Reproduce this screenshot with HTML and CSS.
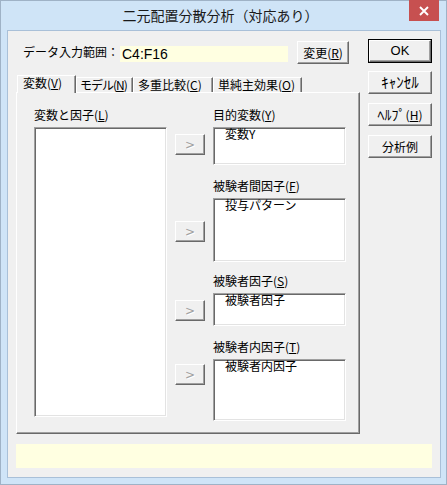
FILE: index.html
```html
<!DOCTYPE html>
<html lang="ja">
<head>
<meta charset="utf-8">
<title>二元配置分散分析（対応あり）</title>
<link rel="stylesheet" href="styles.css">
</head>
<body>
<div class="window">
  <div class="titlebar">
    <div class="title">二元配置分散分析（対応あり）</div>
    <div class="close">
      <svg width="10" height="10" viewBox="0 0 10 10"><path d="M1 1L9 9M9 1L1 9" stroke="#fff" stroke-width="1.9" fill="none"/></svg>
    </div>
  </div>
  <div class="client">
    <div class="main">
      <div class="leftcol">
        <div class="datarow">
          <span class="datalabel">データ入力範囲：</span>
          <span class="datafield">C4:F16</span>
          <button class="btn btn-change">変更(<u>R</u>)</button>
        </div>
        <div class="tabs">
          <div class="tab tab-active t1">変数(<u>V</u>)</div>
          <div class="tab t2">モデル(<u>N</u>)</div>
          <div class="tab t3">多重比較(<u>C</u>)</div>
          <div class="tab t4">単純主効果(<u>O</u>)</div>
        </div>
        <div class="panel">
          <div class="pcol pleft">
            <div class="lbl">変数と因子(<u>L</u>)</div>
            <div class="listbox list-main"></div>
          </div>
          <div class="pcol pmid">
            <button class="arrow a1">&gt;</button>
            <button class="arrow a2">&gt;</button>
            <button class="arrow a3">&gt;</button>
            <button class="arrow a4">&gt;</button>
          </div>
          <div class="pcol pright">
            <div class="lbl">目的変数(<u>Y</u>)</div>
            <div class="listbox box1"><div class="item">変数Y</div></div>
            <div class="lbl g2">被験者間因子(<u>F</u>)</div>
            <div class="listbox box2"><div class="item">投与パターン</div></div>
            <div class="lbl g3">被験者因子(<u>S</u>)</div>
            <div class="listbox box3"><div class="item">被験者因子</div></div>
            <div class="lbl g4">被験者内因子(<u>T</u>)</div>
            <div class="listbox box4"><div class="item">被験者内因子</div></div>
          </div>
        </div>
      </div>
      <div class="side">
        <div class="default-ring"><button class="btn btn-ok">OK</button></div>
        <button class="btn btn-side s2"><span class="hw">ｷｬﾝｾﾙ</span></button>
        <button class="btn btn-side s3"><span class="hw">ﾍﾙﾌﾟ</span>(<u>H</u>)</button>
        <button class="btn btn-side s4">分析例</button>
      </div>
    </div>
    <div class="status"></div>
  </div>
</div>
</body>
</html>
```

FILE: styles.css
```css
* { box-sizing: border-box; }
html, body { margin: 0; padding: 0; }
body {
  width: 447px;
  height: 485px;
  font-family: "Noto Sans CJK JP", "Noto Sans", sans-serif;
  font-size: 12px;
  color: #000;
  overflow: hidden;
}
.window {
  width: 447px;
  height: 485px;
  background: #cfe4f7;
  border: 1px solid #9fb2c6;
  display: flex;
  flex-direction: column;
}
.titlebar {
  height: 29px;
  display: grid;
  grid-template-columns: 1fr auto 1fr;
  align-items: start;
}
.title {
  grid-column: 2;
  font-size: 14px;
  line-height: 28px;
  margin-right: 6px;
  color: #1a1a1a;
  white-space: nowrap;
}
.close {
  grid-column: 3;
  justify-self: end;
  width: 30px;
  height: 21px;
  margin-top: -1px;
  margin-right: 7px;
  background: #c75050;
  display: flex;
  align-items: center;
  justify-content: center;
}
.close svg { display: block; }
.client {
  flex: 1;
  margin: 0 5px 6px 6px;
  border: 1px solid #a9c0d8;
  background: #f0f0f0;
  padding: 8px 8px 0 8px;
  display: flex;
  flex-direction: column;
}
.main {
  display: flex;
  gap: 8px;
}
.leftcol {
  width: 344px;
  display: flex;
  flex-direction: column;
}
.datarow {
  margin-top: 2px;
  height: 23px;
  display: flex;
  align-items: flex-start;
}
.datalabel {
  margin-left: 7px;
  width: 97px;
  margin-top: 3px;
  line-height: 16px;
  white-space: nowrap;
}
.datafield {
  width: 168px;
  height: 16px;
  margin-top: 5px;
  background: #ffffe1;
  font-family: "Liberation Sans", sans-serif;
  font-size: 14px;
  line-height: 16px;
  padding-left: 2px;
}
.btn {
  font-family: "Noto Sans CJK JP", sans-serif;
  font-size: 12px;
  color: #000;
  background: #f0f0f0;
  border: 1px solid;
  border-color: #fff #696969 #696969 #fff;
  box-shadow: inset -1px -1px 0 #a0a0a0;
  padding: 0;
  margin: 0;
  line-height: 14px;
  height: 23px;
  white-space: nowrap;
}
.btn-change {
  margin-left: 9px;
  width: 52px;
}
.tabs {
  margin-top: 11px;
  display: flex;
  align-items: flex-end;
  padding-left: 1px;
}
.tab {
  height: 15px;
  border-top: 1px solid #fff;
  border-left: 1px solid #fff;
  border-right: 1px solid #696969;
  box-shadow: inset -1px 0 0 #a0a0a0;
  line-height: 14px;
  padding-left: 4px;
  white-space: nowrap;
}
.tab-active {
  height: 18px;
  margin-bottom: -1px;
  position: relative;
  z-index: 1;
  background: #f0f0f0;
}
.t1 { width: 59px; padding-left: 5px; }
.t2 { width: 57px; padding-left: 3px; letter-spacing: -1px; }
.t3 { width: 80px; }
.t4 { width: 89px; }
.panel {
  height: 342px;
  border-top: 1px solid #fff;
  border-left: 1px solid #fff;
  border-right: 1px solid #696969;
  border-bottom: 1px solid #696969;
  box-shadow: inset -1px -1px 0 #a0a0a0;
  padding: 15px 0 0 17px;
  display: flex;
  gap: 8px;
}
.pcol {
  display: flex;
  flex-direction: column;
}
.pleft, .pright { width: 133px; }
.pmid { width: 30px; }
.lbl {
  line-height: 14px;
  margin-bottom: 5px;
  white-space: nowrap;
}
.listbox {
  background: #fff;
  border: 1px solid;
  border-color: #a0a0a0 #fff #fff #a0a0a0;
  box-shadow: inset 1px 1px 0 #696969, inset -1px -1px 0 #e3e3e3;
  padding: 0 0 0 11px;
}
.list-main { height: 290px; }
.box1 { height: 38px; }
.box2 { height: 64px; }
.box3 { height: 33px; }
.box4 { height: 62px; }
.g2 { margin-top: 14px; }
.g3 { margin-top: 12px; }
.g4 { margin-top: 14px; }
.item {
  line-height: 12px;
  white-space: nowrap;
}
.arrow {
  width: 30px;
  height: 21px;
  padding: 0;
  background: #f0f0f0;
  border: 1px solid;
  border-color: #fff #696969 #696969 #fff;
  box-shadow: inset -1px -1px 0 #a0a0a0;
  color: #a0a0a0;
  text-shadow: 1px 1px 0 #fff;
  font-family: "DejaVu Sans", sans-serif;
  font-size: 12px;
  line-height: 14px;
}
.a1 { margin-top: 26px; }
.a2 { margin-top: 66px; }
.a3 { margin-top: 58px; }
.a4 { margin-top: 43px; }
.side {
  width: 64px;
  display: flex;
  flex-direction: column;
}
.default-ring {
  border: 1px solid #000;
  height: 24px;
  display: flex;
}
.btn-ok {
  width: 62px;
  height: 22px;
  font-family: "Liberation Sans", sans-serif;
  font-size: 13px;
}
.btn-side {
  width: 64px;
  height: 23px;
}
.hw { font-size: 15px; line-height: 14px; }
.s3 .hw { font-size: 14px; }
.s2 { margin-top: 8px; }
.s3 { margin-top: 9px; }
.s4 { margin-top: 9px; }
.status {
  margin-top: 10px;
  height: 24px;
  background: #ffffe1;
}
```
